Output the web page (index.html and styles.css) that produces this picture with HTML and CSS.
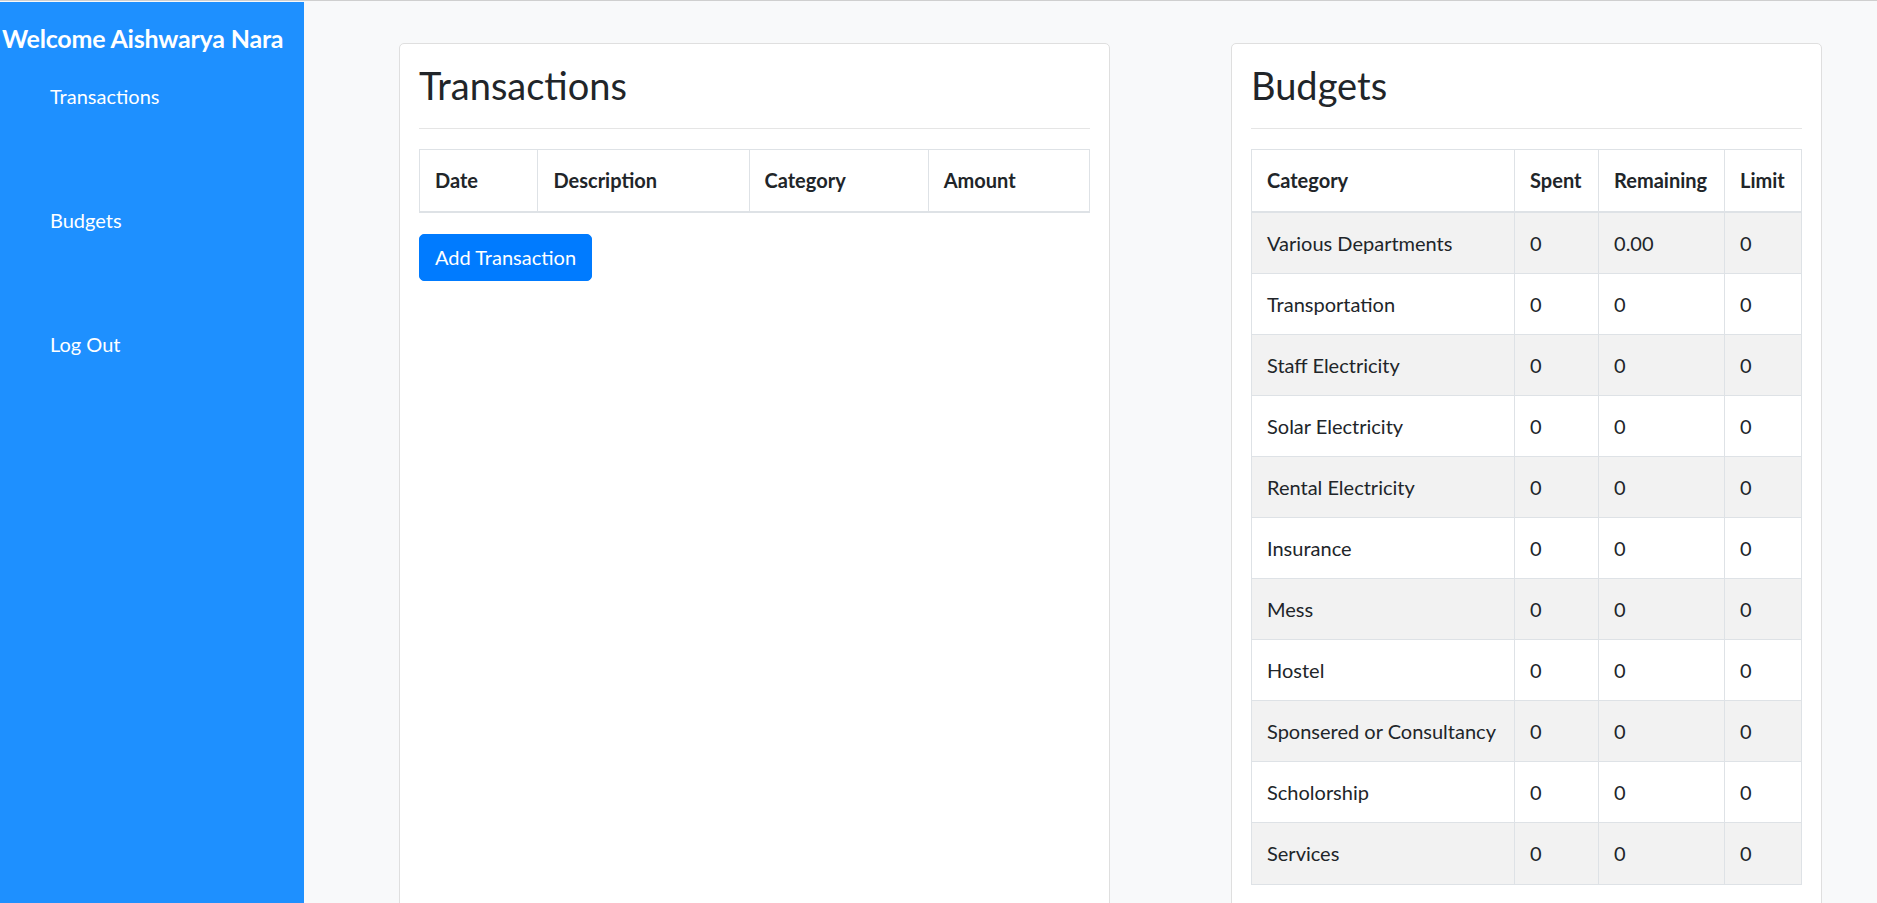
FILE: index.html
```html
<!DOCTYPE html>
<html lang="en">
<head>
<meta charset="utf-8">
<title>Budget Tracker</title>
<link rel="stylesheet" href="styles.css">
</head>
<body>
<div class="layout">
  <aside class="sidebar">
    <h4 class="welcome">Welcome Aishwarya Nara</h4>
    <nav class="nav">
      <a class="nav-link" href="#">Transactions</a>
      <a class="nav-link" href="#">Budgets</a>
      <a class="nav-link" href="#">Log Out</a>
    </nav>
  </aside>
  <main class="main">
    <section class="card card-tx">
      <h2 class="card-title">Transactions</h2>
      <hr class="divider">
      <table class="table tx-table">
        <thead>
          <tr>
            <th class="c-date">Date</th>
            <th class="c-desc">Description</th>
            <th class="c-cat">Category</th>
            <th class="c-amt">Amount</th>
          </tr>
        </thead>
        <tbody></tbody>
      </table>
      <button class="btn" type="button">Add Transaction</button>
    </section>
    <section class="card card-budget">
      <h2 class="card-title">Budgets</h2>
      <hr class="divider">
      <table class="table budget-table">
        <thead>
          <tr>
            <th class="b-cat">Category</th>
            <th class="b-spent">Spent</th>
            <th class="b-rem">Remaining</th>
            <th class="b-lim">Limit</th>
          </tr>
        </thead>
        <tbody>
          <tr><td>Various Departments</td><td>0</td><td>0.00</td><td>0</td></tr>
          <tr><td>Transportation</td><td>0</td><td>0</td><td>0</td></tr>
          <tr><td>Staff Electricity</td><td>0</td><td>0</td><td>0</td></tr>
          <tr><td>Solar Electricity</td><td>0</td><td>0</td><td>0</td></tr>
          <tr><td>Rental Electricity</td><td>0</td><td>0</td><td>0</td></tr>
          <tr><td>Insurance</td><td>0</td><td>0</td><td>0</td></tr>
          <tr><td>Mess</td><td>0</td><td>0</td><td>0</td></tr>
          <tr><td>Hostel</td><td>0</td><td>0</td><td>0</td></tr>
          <tr><td>Sponsered or Consultancy</td><td>0</td><td>0</td><td>0</td></tr>
          <tr><td>Scholorship</td><td>0</td><td>0</td><td>0</td></tr>
          <tr><td>Services</td><td>0</td><td>0</td><td>0</td></tr>
        </tbody>
      </table>
    </section>
  </main>
</div>
</body>
</html>
```

FILE: styles.css
```css
* { box-sizing: border-box; }

html, body {
  margin: 0;
  padding: 0;
}

body {
  font-family: Lato, "Open Sans", Arial, sans-serif;
  color: #212529;
  background: #f8f9fa;
  border-top: 1px solid #cfcfcf;
  padding-top: 1px;
  overflow: hidden;
  height: 903px;
}

.layout {
  display: flex;
  align-items: stretch;
  min-height: 901px;
}

.sidebar {
  flex: 0 0 304px;
  width: 304px;
  background: #1e90ff;
  color: #fff;
  padding-top: 20px;
  min-height: 901px;
}

.welcome {
  margin: 0;
  padding-left: 2px;
  font-size: 25px;
  font-weight: 700;
  line-height: 32px;
  white-space: nowrap;
  letter-spacing: -0.2px;
}

.nav {
  display: flex;
  flex-direction: column;
  gap: 94px;
  margin-top: 27px;
  padding-left: 50px;
}

.nav-link {
  color: #fff;
  text-decoration: none;
  font-size: 20px;
  line-height: 30px;
}

.main {
  flex: 1;
  display: flex;
  align-items: flex-start;
  gap: 121px;
  padding: 41px 0 0 95px;
}

.card {
  background: #fff;
  border: 1px solid #dfdfdf;
  border-radius: 5px;
  padding: 17px 19px 20px 19px;
  min-height: 900px;
}

.card-tx { width: 711px; }
.card-budget { width: 591px; }

.card-title {
  margin: 0;
  font-size: 38px;
  font-weight: 400;
  line-height: 48px;
  padding-left: 0;
}

.divider {
  border: 0;
  border-top: 1px solid #e5e5e5;
  margin: 19px 0 20px 0;
  height: 0;
}

.table {
  width: 100%;
  border-collapse: collapse;
  font-size: 20px;
  color: #212529;
}

.table th,
.table td {
  border: 1px solid #dee2e6;
  padding: 15px 15px;
  text-align: left;
  vertical-align: top;
}

.table th {
  font-weight: 700;
  line-height: 30.5px;
  border-bottom: 2px solid #dee2e6;
}

.table td {
  line-height: 30.1px;
  font-weight: 400;
}

.table tbody tr:nth-child(odd) td {
  background: #f2f2f2;
}

.tx-table { margin-bottom: 21px; }

.c-date { width: 119px; }
.c-desc { width: 212px; }
.c-cat  { width: 180px; }
.c-amt  { width: 162px; }

.b-cat   { width: 265px; }
.b-spent { width: 84px; }
.b-rem   { width: 126px; }
.b-lim   { width: 77px; }

.btn {
  display: inline-block;
  font-family: inherit;
  font-size: 20px;
  line-height: 30px;
  color: #fff;
  background: #007bff;
  border: 1px solid #007bff;
  border-radius: 5px;
  padding: 7.5px 15px;
  cursor: pointer;
}
```
